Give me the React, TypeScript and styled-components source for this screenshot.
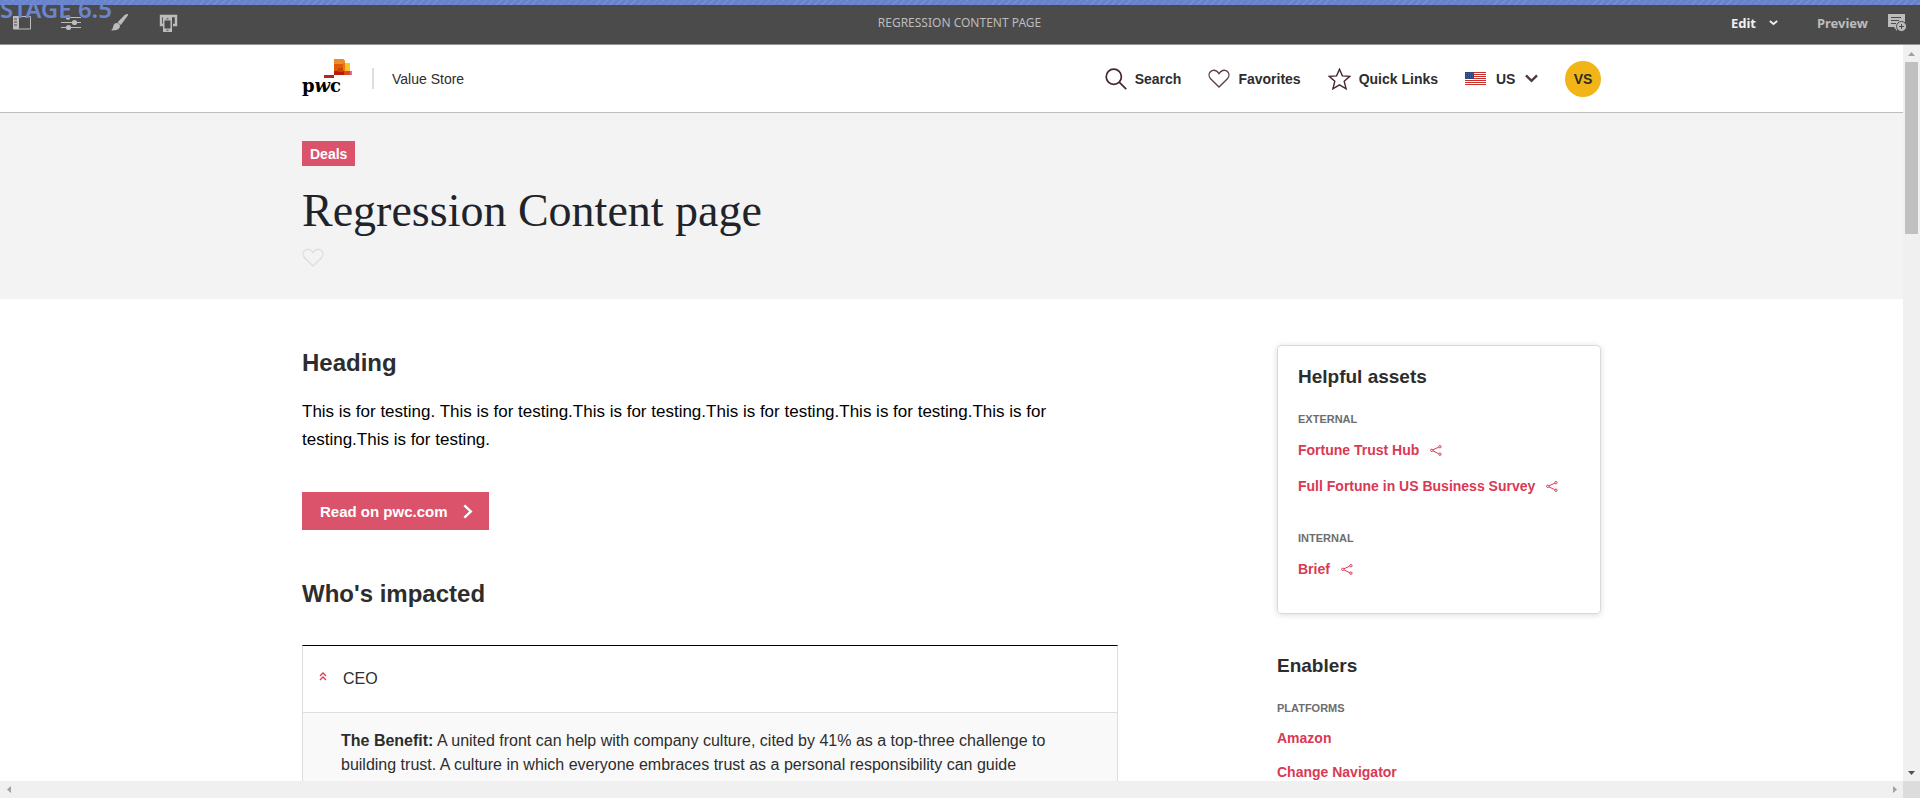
import React from "react";
import styled, { createGlobalStyle } from "styled-components";

const GlobalStyle = createGlobalStyle`
  *, *::before, *::after { box-sizing: border-box; }
  body {
    margin: 0;
    overflow: hidden;
    background: #fff;
    color: #2d2d2d;
    font-family: "Liberation Sans", Arial, sans-serif;
  }
  h1, h2, h3, h4, p, ul { margin: 0; padding: 0; font-weight: inherit; }
  ul { list-style: none; }
  svg { display: block; flex: none; }
  button, select { font: inherit; color: inherit; background: none; border: 0; padding: 0; cursor: pointer; }
`;

const Shell = styled.div`
  display: flex;
  flex-direction: column;
  height: 100vh;
`;

const Stripe = styled.div`
  height: 5px;
  flex: none;
  background: repeating-linear-gradient(135deg, #6783cc 0 4px, #7890d2 4px 5px);
`;

const EditorBar = styled.header`
  position: relative;
  flex: none;
  display: grid;
  grid-template-columns: 1fr auto 1fr;
  align-items: center;
  height: 40px;
  padding: 0 13px 4px 12px;
  background: #4b4b4b;
  border-bottom: 1px solid #969696;
  color: #bcbcbc;
  font-family: "Noto Sans", sans-serif;
  font-size: 12px;
`;

const StageLabel = styled.span`
  position: absolute;
  left: 0;
  top: -12px;
  color: #6b86cf;
  font-size: 24px;
  font-weight: 600;
  line-height: 32px;
`;

const Tools = styled.div`
  display: flex;
  gap: 29px;
`;

const ModeGroup = styled.div`
  display: flex;
  justify-content: flex-end;
  align-items: center;
  font-size: 13px;
  font-weight: 700;
`;

const EditButton = styled.button`
  display: flex;
  align-items: center;
  gap: 13px;
  margin-right: 39px;
  color: #f0f0f0;
`;

const PreviewButton = styled.button`
  margin-right: 19px;
`;

const Frame = styled.div`
  flex: 1;
  min-height: 0;
  display: grid;
  grid-template-columns: minmax(0, 1fr) 17px;
  grid-template-rows: minmax(0, 1fr) 17px;
`;

const Page = styled.div`
  overflow: hidden;
`;

const VerticalBar = styled.div`
  display: flex;
  flex-direction: column;
  align-items: center;
  background: #f0f0f0;
`;

const Track = styled.div`
  flex: 1;
  width: 13px;
`;

const Thumb = styled.div`
  height: 24.5%;
  background: #c0c0c0;
`;

const ScrollArrow = styled.button`
  width: 17px;
  height: 17px;
  display: grid;
  place-items: center;
`;

const HorizontalBar = styled.div`
  display: flex;
  justify-content: space-between;
  background: #f0f0f0;
`;

const Corner = styled.div`
  background: #dcdcdc;
`;

const Container = styled.div`
  max-width: 1299px;
  margin: 0 auto;
`;

const SiteHeader = styled.header`
  border-bottom: 1px solid #bebebe;
`;

const HeaderRow = styled(Container)`
  display: flex;
  align-items: center;
  justify-content: space-between;
  height: 67px;
`;

const Brand = styled.a`
  display: flex;
  align-items: center;
  color: inherit;
  text-decoration: none;
  font-size: 14px;
`;

const BrandName = styled.span`
  display: flex;
  align-items: center;
  height: 21px;
  margin-left: 20px;
  padding-left: 18px;
  border-left: 2px solid #dedede;
`;

const Nav = styled.nav`
  display: flex;
  align-items: center;
  gap: 27px;
  font-size: 14px;
  font-weight: 700;
`;

const NavItem = styled.button`
  display: flex;
  align-items: center;
  gap: 8px;
  font-weight: 700;
`;

const Region = styled.label`
  display: flex;
  align-items: center;
`;

const RegionSelect = styled.select`
  appearance: none;
  margin: 0 9px 0 10px;
  font-weight: 700;
  outline: none;
`;

const Avatar = styled.button`
  width: 36px;
  height: 36px;
  border-radius: 50%;
  background: #f2b517;
  font-weight: 700;
`;

const Hero = styled.section`
  background: #f3f3f3;
  padding: 28px 0;
`;

const Tag = styled.span`
  display: inline-block;
  padding: 1px 8px 0;
  background: #db536a;
  color: #fff;
  font-size: 14px;
  font-weight: 700;
  line-height: 24px;
`;

const Title = styled.h1`
  margin: 17px 0 9px;
  color: #20242a;
  font-family: "Liberation Serif", "Times New Roman", serif;
  font-size: 46px;
  line-height: 56px;
`;

const Columns = styled(Container)`
  display: grid;
  grid-template-columns: minmax(0, 816px) 324px;
  justify-content: space-between;
  padding-top: 46px;
`;

const Section = styled.section`
  margin-top: 46px;
  &:first-child { margin-top: 0; }
`;

const SectionTitle = styled.h2`
  color: #2d2d2d;
  font-size: 24px;
  font-weight: 700;
  line-height: 36px;
`;

const Lead = styled.p`
  margin: 17px 0 38px;
  color: #000;
  font-size: 17px;
  line-height: 28px;
`;

const ReadLink = styled.a`
  display: flex;
  align-items: center;
  gap: 15px;
  width: fit-content;
  height: 38px;
  padding: 0 16px 0 18px;
  background: #db536a;
  color: #fff;
  font-size: 15px;
  font-weight: 700;
  text-decoration: none;
`;

const Accordion = styled.div`
  margin-top: 33px;
  border: 1px solid #dedede;
  border-top-color: #000;
`;

const AccordionToggle = styled.button`
  display: flex;
  align-items: center;
  gap: 16px;
  width: 100%;
  height: 67px;
  padding: 0 16px;
  border-bottom: 1px solid #dedede;
  font-size: 16px;

  svg { margin-bottom: 6px; }
`;

const AccordionPanel = styled.div`
  padding: 16px 38px 24px;
  background: #f9f9f9;
  font-size: 16px;
  line-height: 24px;
`;

const Aside = styled.aside`
  display: flex;
  flex-direction: column;
  gap: 36px;
`;

const Card = styled.section`
  padding: 15px 20px 26px;
  border: 1px solid #dadada;
  border-radius: 4px;
  box-shadow: 0 1px 6px rgba(0, 0, 0, 0.14);
`;

const AsideTitle = styled.h3`
  font-size: 19px;
  font-weight: 700;
  line-height: 32px;
`;

const GroupTitle = styled.h4`
  color: #6d6d6d;
  font-size: 11px;
  font-weight: 700;
  line-height: 16px;
`;

const Group = styled.div<{ $gap: number }>`
  margin-top: ${(p) => p.$gap}px;
`;

const LinkList = styled.ul<{ $row: number }>`
  padding-top: 5px;
  li {
    display: flex;
    align-items: center;
    gap: 11px;
    height: ${(p) => p.$row}px;
  }
`;

const RedLink = styled.a`
  color: #d93954;
  font-size: 14px;
  font-weight: 700;
  text-decoration: none;
`;

const HEART = "M11 18 2.6 9.8C.6 7.6.6 4.4 2.6 2.5c2-1.9 5-1.7 6.8.3L11 4.6l1.6-1.8c1.8-2 4.8-2.2 6.8-.3 2 1.9 2 5.1 0 7.3z";

const Heart = ({ color }: { color: string }) => (
  <svg width="22" height="19" viewBox="0 0 22 19" fill="none" stroke={color} strokeWidth="1.4">
    <path d={HEART} />
  </svg>
);

const Share = () => (
  <svg width="12" height="11" viewBox="0 0 12 11" fill="none" stroke="#d93954" strokeWidth="1">
    <circle cx="1.8" cy="5.3" r="1.2" />
    <circle cx="9.9" cy="1.7" r="1.2" />
    <circle cx="9.9" cy="9.2" r="1.2" />
    <path d="M3 4.8 8.7 2.2M3 5.9l5.7 2.8" />
  </svg>
);

const Logo = () => (
  <svg width="50" height="39" viewBox="0 0 50 39" role="img" aria-label="pwc">
    <path d="M32 0h9l2 2v14H32z" fill="#dc5a05" />
    <path d="M32 0h9l2 2v3H32z" fill="#eb8c2a" />
    <path d="M43 4h5v9h-5z" fill="#ffc327" />
    <path d="M41 4h2v9h-2z" fill="#e87711" />
    <path d="M32 12h11v4H32z" fill="#b81c05" />
    <path d="M36 9h5v4h-5z" fill="#cc4405" />
    <path d="M42 12h6v4h-6z" fill="#dc4a1c" />
    <path d="M48 12h2v4h-2z" fill="#e669a2" />
    <path d="M22 16h10v3H22z" fill="#b5261c" />
    <text x="0" y="33" fontFamily="'DejaVu Serif', serif" fontWeight="700" fontSize="18" fill="#000">
      p<tspan fontStyle="italic">w</tspan>c
    </text>
  </svg>
);

const Flag = () => (
  <svg width="21" height="13" viewBox="0 0 21 13">
    <rect width="21" height="13" fill="#fff" />
    {[0, 2, 4, 6, 8, 10, 12].map((y) => (
      <rect key={y} y={y} width="21" height="1" fill="#c8312b" />
    ))}
    <rect width="9" height="7" fill="#2c4a7c" />
    {[1, 3, 5].map((y) => (
      <path key={y} d={`M1 ${y + 0.5}h7`} stroke="#5873a0" strokeWidth="0.6" strokeDasharray="1 1" />
    ))}
  </svg>
);

const helpful = [
  { title: "EXTERNAL", links: ["Fortune Trust Hub", "Full Fortune in US Business Survey"] },
  { title: "INTERNAL", links: ["Brief"] },
];

export default function App() {
  return (
    <Shell>
      <GlobalStyle />
      <Stripe />
      <EditorBar>
        <Tools>
          <button aria-label="Toggle side panel">
            <svg width="20" height="18" viewBox="0 0 20 18">
              <path d="M1.500 2.500h17v12.500h-17z" fill="none" stroke="#bcbcbc" />
              <path d="M1 2h6v13H1z" fill="#bcbcbc" />
              <path d="M2 5h3M2 8h3M2 11h3" stroke="#4b4b4b" />
            </svg>
          </button>
          <button aria-label="Page information">
            <svg width="20" height="18" viewBox="0 0 20 18" stroke="#bcbcbc" fill="#bcbcbc">
              <path d="M0 3.500h20M0 8.500h20M0 13.500h20" />
              <circle cx="7" cy="3.500" r="2.300" stroke="none" />
              <circle cx="13.500" cy="8.500" r="2.600" stroke="none" />
              <circle cx="7.500" cy="13.500" r="2.600" stroke="none" />
            </svg>
          </button>
          <button aria-label="Styles">
            <svg width="20" height="18" viewBox="0 0 20 18" fill="#bcbcbc">
              <path d="M17.500 0c.8 0 .7.8.3 1.600L10.800 11 7.600 8.200 14.500 1.200c.9-.8 2-1.200 3-1.200z" />
              <path d="M7 9c1.800.2 3.100 1.500 3 3.300C9.600 16 4.500 16.800.5 16.300c2.300-.6 2.200-2.100 2.800-4.300C3.800 10 5.200 8.900 7 9z" />
            </svg>
          </button>
          <button aria-label="Emulator">
            <svg width="20" height="18" viewBox="0 0 20 18">
              <path d="M4 11H2V2h15v9h-3" fill="none" stroke="#bcbcbc" strokeWidth="2.400" />
              <path d="M4 3h9v15H4z" fill="#bcbcbc" />
              <path d="M5.500 6.500h6v8h-6z" fill="#4b4b4b" />
              <path d="M7.500 4.800h2M7.500 16.200h2" stroke="#4b4b4b" />
            </svg>
          </button>
        </Tools>
        <span>REGRESSION CONTENT PAGE</span>
        <ModeGroup>
          <EditButton>
            Edit
            <svg width="9" height="6" viewBox="0 0 9 6" fill="none" stroke="#f0f0f0" strokeWidth="1.800">
              <path d="M.8 1l3.700 3L8.200 1" />
            </svg>
          </EditButton>
          <PreviewButton>Preview</PreviewButton>
          <button aria-label="Annotate">
            <svg width="20" height="18" viewBox="0 0 20 18">
              <path d="M1 0h17v13h-8v4l-3-4H1z" fill="#bcbcbc" />
              <path d="M4 3.500h10M4 6.500h8M4 9.500h5" stroke="#4b4b4b" />
              <circle cx="14.500" cy="12.500" r="5" fill="#bcbcbc" stroke="#4b4b4b" />
              <path d="M14.500 10v5M12 12.500h5" stroke="#4b4b4b" />
            </svg>
          </button>
        </ModeGroup>
        <StageLabel>STAGE 6.5</StageLabel>
      </EditorBar>

      <Frame>
        <Page>
          <SiteHeader>
            <HeaderRow>
              <Brand href="#home">
                <Logo />
                <BrandName>Value Store</BrandName>
              </Brand>
              <Nav>
                <NavItem>
                  <svg width="22" height="22" viewBox="0 0 22 22" fill="none" stroke="#46262c" strokeWidth="1.700">
                    <circle cx="8.800" cy="8.800" r="7.600" />
                    <path d="M14.200 14.200l7 7" />
                  </svg>
                  Search
                </NavItem>
                <NavItem>
                  <Heart color="#5e4046" />
                  Favorites
                </NavItem>
                <NavItem>
                  <svg width="23" height="22" viewBox="0 0 23 22" fill="none" stroke="#46262c" strokeWidth="1.400">
                    <path d="M11.500 1.200l2.900 6.700 7.400.4-5.600 5 1.900 7.500-6.600-3.900-6.600 3.900 1.900-7.500-5.600-5 7.400-.4z" />
                  </svg>
                  Quick Links
                </NavItem>
                <Region>
                  <Flag />
                  <RegionSelect aria-label="Region" defaultValue="US">
                    <option>US</option>
                  </RegionSelect>
                  <svg width="13" height="9" viewBox="0 0 13 9" fill="none" stroke="#4d3b40" strokeWidth="2.400">
                    <path d="M1 1.300l5.500 5.600L12 1.300" />
                  </svg>
                </Region>
                <Avatar>VS</Avatar>
              </Nav>
            </HeaderRow>
          </SiteHeader>

          <Hero>
            <Container>
              <Tag>Deals</Tag>
              <Title>Regression Content page</Title>
              <button aria-label="Add to favorites">
                <Heart color="#dedede" />
              </button>
            </Container>
          </Hero>

          <Columns>
            <main>
              <Section>
                <SectionTitle>Heading</SectionTitle>
                <Lead>
                  This is for testing. This is for testing.This is for testing.This is for testing.This is for
                  testing.This is for testing.This is for testing.
                </Lead>
                <ReadLink href="#read">
                  Read on pwc.com
                  <svg width="10" height="15" viewBox="0 0 10 15" fill="none" stroke="#fff" strokeWidth="2.400">
                    <path d="M1.300 1.300l6.500 6.200-6.500 6.200" />
                  </svg>
                </ReadLink>
              </Section>
              <Section>
                <SectionTitle>Who's impacted</SectionTitle>
                <Accordion>
                  <AccordionToggle aria-expanded="true">
                    <svg width="8" height="9" viewBox="0 0 8 9" fill="none" stroke="#d93954" strokeWidth="1.300">
                      <path d="M1 4l3-3 3 3M1 8l3-3 3 3" />
                    </svg>
                    CEO
                  </AccordionToggle>
                  <AccordionPanel>
                    <strong>The Benefit:</strong> A united front can help with company culture, cited by 41% as a
                    top-three challenge to building trust. A culture in which everyone embraces trust as a personal
                    responsibility can guide
                  </AccordionPanel>
                </Accordion>
              </Section>
            </main>
            <Aside>
              <Card>
                <AsideTitle>Helpful assets</AsideTitle>
                {helpful.map((group, i) => (
                  <Group key={group.title} $gap={i === 0 ? 18 : 26}>
                    <GroupTitle>{group.title}</GroupTitle>
                    <LinkList $row={36}>
                      {group.links.map((link) => (
                        <li key={link}>
                          <RedLink href="#asset">{link}</RedLink>
                          <button aria-label={`Share ${link}`}>
                            <Share />
                          </button>
                        </li>
                      ))}
                    </LinkList>
                  </Group>
                ))}
              </Card>
              <section>
                <AsideTitle>Enablers</AsideTitle>
                <Group $gap={18}>
                  <GroupTitle>PLATFORMS</GroupTitle>
                  <LinkList $row={34}>
                    {["Amazon", "Change Navigator"].map((link) => (
                      <li key={link}>
                        <RedLink href="#platform">{link}</RedLink>
                      </li>
                    ))}
                  </LinkList>
                </Group>
              </section>
            </Aside>
          </Columns>
        </Page>
        <VerticalBar>
          <ScrollArrow aria-label="Scroll up">
            <svg width="7" height="4" viewBox="0 0 7 4">
              <path d="M0 4l3.500-4L7 4z" fill="#a0a0a0" />
            </svg>
          </ScrollArrow>
          <Track>
            <Thumb />
          </Track>
          <ScrollArrow aria-label="Scroll down">
            <svg width="7" height="4" viewBox="0 0 7 4">
              <path d="M0 0h7L3.500 4z" fill="#505050" />
            </svg>
          </ScrollArrow>
        </VerticalBar>
        <HorizontalBar>
          <ScrollArrow aria-label="Scroll left">
            <svg width="4" height="7" viewBox="0 0 4 7">
              <path d="M4 0v7L0 3.500z" fill="#a0a0a0" />
            </svg>
          </ScrollArrow>
          <ScrollArrow aria-label="Scroll right">
            <svg width="4" height="7" viewBox="0 0 4 7">
              <path d="M0 0l4 3.500L0 7z" fill="#a0a0a0" />
            </svg>
          </ScrollArrow>
        </HorizontalBar>
        <Corner />
      </Frame>
    </Shell>
  );
}
